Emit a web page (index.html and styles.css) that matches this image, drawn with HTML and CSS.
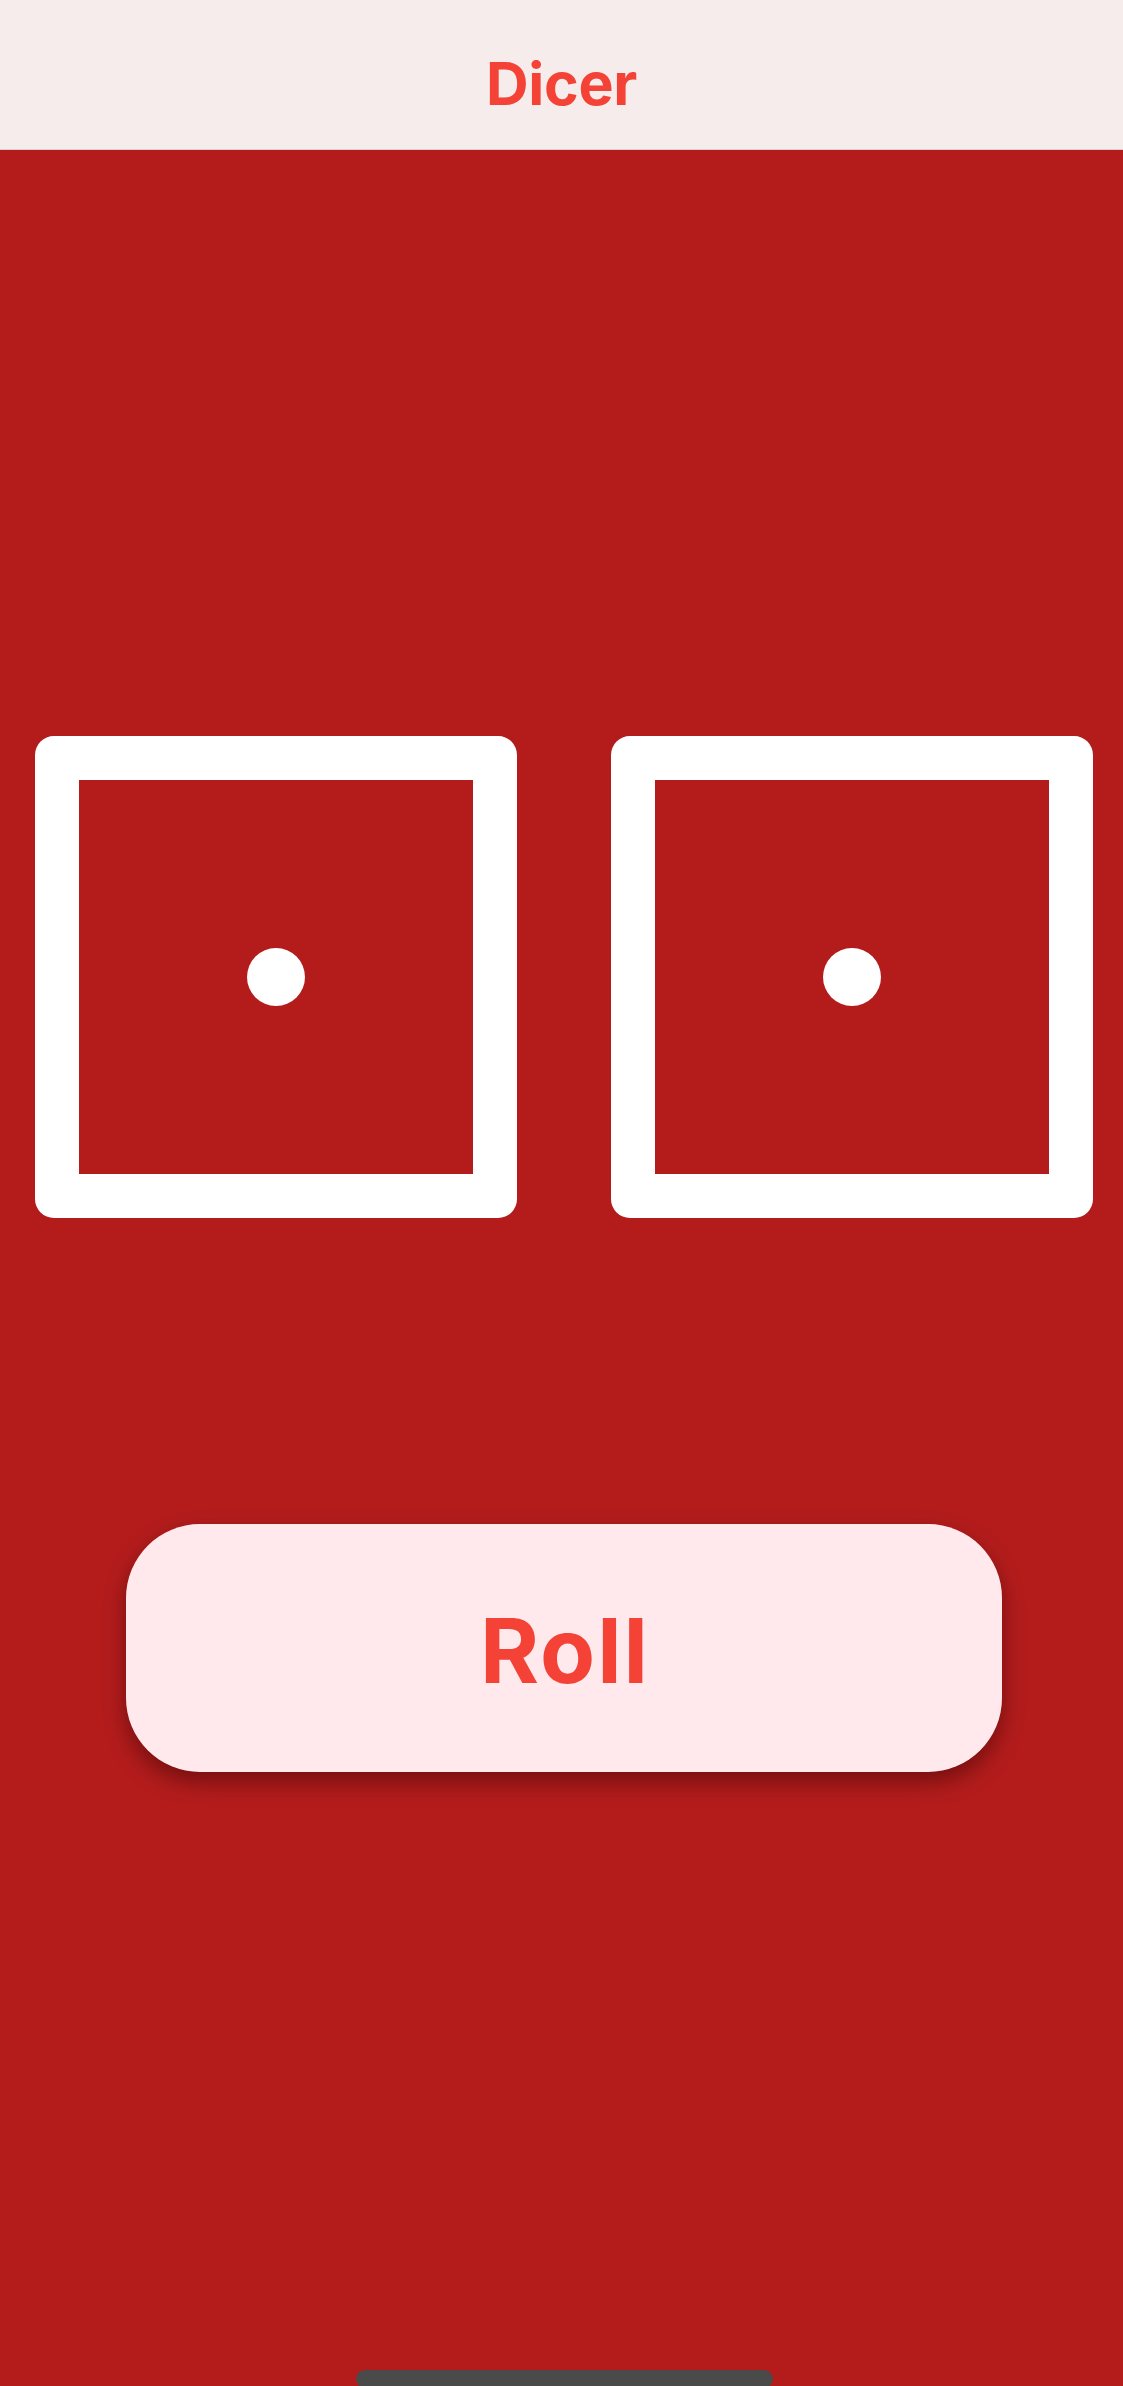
FILE: index.html
```html
<!DOCTYPE html>
<html lang="en">
<head>
<meta charset="utf-8">
<title>Dicer</title>
<link rel="stylesheet" href="styles.css">
</head>
<body>
<div class="app">
  <header class="topbar">
    <h1 class="title">Dicer</h1>
  </header>
  <main class="content">
    <div class="dice-row">
      <div class="die"><span class="pip"></span></div>
      <div class="die"><span class="pip"></span></div>
    </div>
    <button class="roll-btn" type="button"><span class="roll-label">Roll</span></button>
  </main>
  <div class="home-indicator"></div>
</div>
</body>
</html>
```
FILE: styles.css
```css
html, body {
  margin: 0;
  padding: 0;
}
body {
  background: #b41c1c;
  font-family: Inter, "Noto Sans", "Liberation Sans", sans-serif;
}
.app {
  position: relative;
  height: 2386px;
  overflow: hidden;
  background: #b41c1c;
}
.topbar {
  box-sizing: border-box;
  height: 150px;
  padding-top: 54px;
  background: #f5eceb;
  border-bottom: 1px solid #d9cfce;
  text-align: center;
}
.title {
  margin: 0;
  font-size: 59px;
  line-height: 59px;
  font-weight: 700;
  color: #f44336;
  letter-spacing: -0.3px;
}
.content {
  display: flex;
  flex-direction: column;
  align-items: center;
  padding: 586px 30px 0 35px;
}
.dice-row {
  display: flex;
  gap: 94px;
}
.die {
  box-sizing: border-box;
  width: 482px;
  height: 482px;
  border: 44px solid #ffffff;
  border-radius: 19px;
  display: flex;
  align-items: center;
  justify-content: center;
}
.pip {
  width: 58px;
  height: 58px;
  border-radius: 50%;
  background: #ffffff;
}
.roll-btn {
  margin-top: 306px;
  width: 876px;
  height: 248px;
  border: none;
  border-radius: 74px;
  background: #ffe9ec;
  color: #f44336;
  font-family: Inter, "Noto Sans", "Liberation Sans", sans-serif;
  font-size: 90px;
  line-height: 1;
  font-weight: 700;
  box-shadow: 0 10px 22px rgba(40, 0, 0, 0.45);
  display: flex;
  align-items: center;
  justify-content: center;
  padding: 5px 0 0 0;
}
.roll-label {
  letter-spacing: 2px;
  margin-right: -2px;
}
.home-indicator {
  position: absolute;
  left: 356px;
  bottom: -2px;
  width: 417px;
  height: 18px;
  border-radius: 9px;
  background: #4a4a4a;
}
```
